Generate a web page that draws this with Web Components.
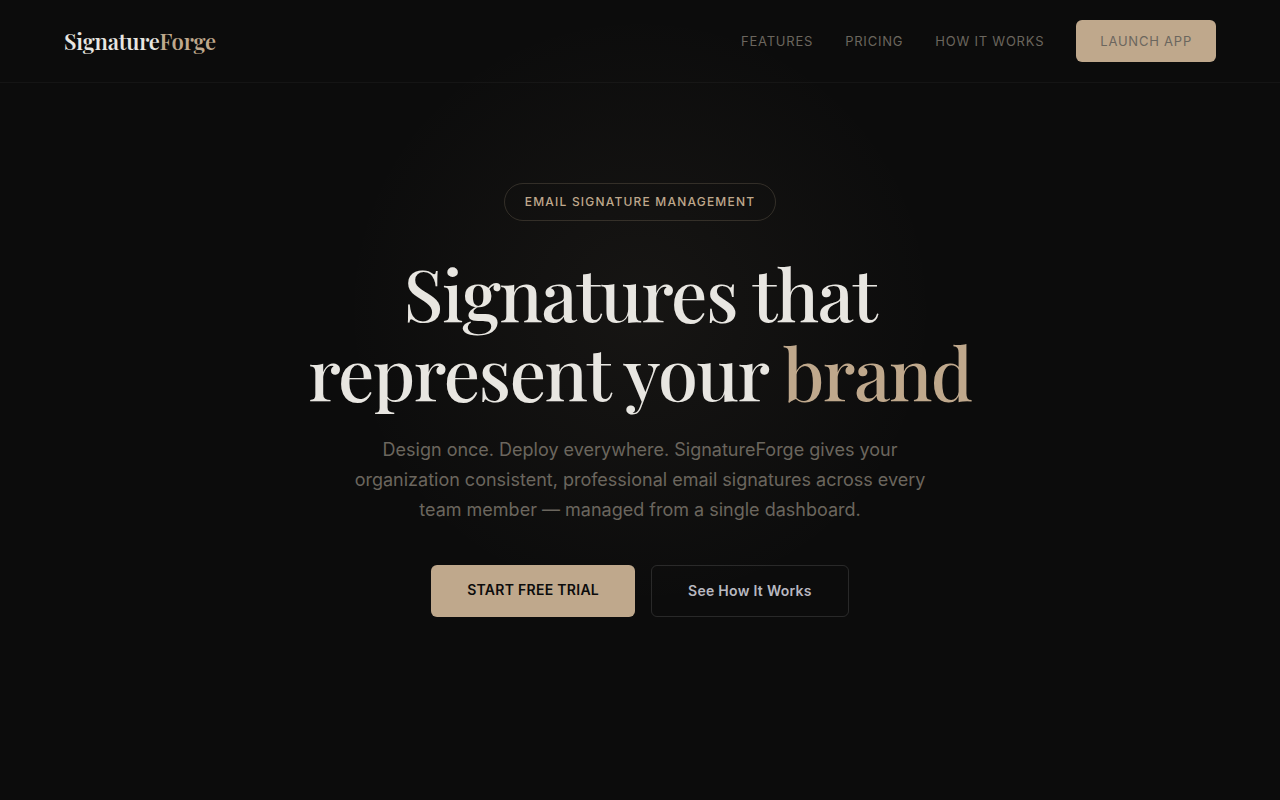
<!DOCTYPE html>
<html lang="en">
<head>
<meta charset="utf-8">
<meta name="viewport" content="width=device-width, initial-scale=1">
<title>SignatureForge</title>
<style>
  :root {
    --bg: #0c0c0c;
    --ink: #e8e6e1;
    --accent: #bfa88c;
    --muted: #6b665e;
    --display: "Playfair Display", "Liberation Serif", serif;
  }
  body {
    margin: 0;
    background: var(--bg);
    color: var(--ink);
    font-family: Inter, "Liberation Sans", sans-serif;
    -webkit-font-smoothing: antialiased;
  }
</style>
</head>
<body>
<landing-page>
  <site-header slot="header">
    <brand-logo></brand-logo>
    <nav-link slot="nav" href="#features">Features</nav-link>
    <nav-link slot="nav" href="#pricing">Pricing</nav-link>
    <nav-link slot="nav" href="#how">How It Works</nav-link>
    <nav-link slot="nav" href="#app" cta>Launch App</nav-link>
  </site-header>
  <hero-section>
    <pill-badge slot="badge">Email Signature Management</pill-badge>
    <hero-title slot="title">Signatures that represent your <span>brand</span></hero-title>
    <span slot="lead">Design once. Deploy everywhere. SignatureForge gives your organization consistent, professional email signatures across every team member — managed from a single dashboard.</span>
    <action-link slot="actions" href="#trial" primary>Start Free Trial</action-link>
    <action-link slot="actions" href="#how">See How It Works</action-link>
  </hero-section>
</landing-page>

<script>
const define = (name, render) => customElements.define(name, class extends HTMLElement {
  constructor() {
    super();
    this.attachShadow({ mode: "open" }).innerHTML = render(this);
  }
});

define("landing-page", () => `
  <style>
    :host {
      display: flex;
      flex-direction: column;
      min-height: 100vh;
      background: radial-gradient(circle at 50% 310px, rgba(191, 168, 140, 0.06), transparent 296px);
    }
    main { flex: 1; }
  </style>
  <slot name="header"></slot>
  <main><slot></slot></main>`);

define("site-header", () => `
  <style>
    :host { display: block; }
    header {
      display: flex;
      align-items: center;
      justify-content: space-between;
      padding: 20px 64px;
      border-bottom: 1px solid rgba(255, 255, 255, 0.04);
    }
    nav { display: flex; align-items: center; gap: 32px; }
  </style>
  <header><slot></slot><nav aria-label="Main"><slot name="nav"></slot></nav></header>`);

define("brand-logo", () => `
  <style>
    :host { display: block; }
    a {
      display: block;
      font: 600 22px/32px var(--display);
      letter-spacing: -0.01em;
      color: var(--ink);
      text-decoration: none;
    }
    span { color: var(--accent); }
  </style>
  <a href="#">Signature<span>Forge</span></a>`);

define("nav-link", host => `
  <style>
    :host { display: block; }
    a {
      display: block;
      font-size: 13px;
      line-height: 22px;
      letter-spacing: 0.06em;
      text-transform: uppercase;
      color: var(--muted);
      text-decoration: none;
    }
    :host([cta]) a {
      padding: 10px 24px;
      border-radius: 6px;
      background: var(--accent);
    }
  </style>
  <a href="${host.getAttribute("href")}"><slot></slot></a>`);

define("hero-section", () => `
  <style>
    :host { display: block; }
    section {
      display: flex;
      flex-direction: column;
      align-items: center;
      padding: 100px 64px;
      text-align: center;
    }
    p {
      max-width: 580px;
      margin: 24px 0 40px;
      font-size: 18px;
      line-height: 30px;
      color: var(--muted);
    }
    .actions { display: flex; gap: 16px; }
  </style>
  <section>
    <slot name="badge"></slot>
    <slot name="title"></slot>
    <p><slot name="lead"></slot></p>
    <div class="actions"><slot name="actions"></slot></div>
  </section>`);

define("pill-badge", () => `
  <style>
    :host {
      display: block;
      padding: 8px 20px;
      border: 1px solid rgba(191, 168, 140, 0.2);
      border-radius: 20px;
      font-size: 12px;
      font-weight: 500;
      line-height: 20px;
      letter-spacing: 0.1em;
      text-transform: uppercase;
      color: var(--accent);
    }
  </style>
  <slot></slot>`);

define("hero-title", () => `
  <style>
    :host { display: block; max-width: 720px; margin-top: 32px; }
    h1 {
      margin: 0;
      font: 500 72px/79px var(--display);
      letter-spacing: -0.02em;
      color: var(--ink);
    }
    ::slotted(span) { color: var(--accent); }
  </style>
  <h1><slot></slot></h1>`);

define("action-link", host => `
  <style>
    :host { display: flex; }
    a {
      box-sizing: border-box;
      padding: 14px 36px;
      border: 1px solid rgba(255, 255, 255, 0.12);
      border-radius: 6px;
      font-size: 14px;
      font-weight: 600;
      line-height: 22px;
      letter-spacing: 0.02em;
      color: #b8b8c0;
      text-decoration: none;
    }
    :host([primary]) a {
      border: 0;
      text-transform: uppercase;
      background: var(--accent);
      color: var(--bg);
    }
  </style>
  <a href="${host.getAttribute("href")}"><slot></slot></a>`);
</script>
</body>
</html>
